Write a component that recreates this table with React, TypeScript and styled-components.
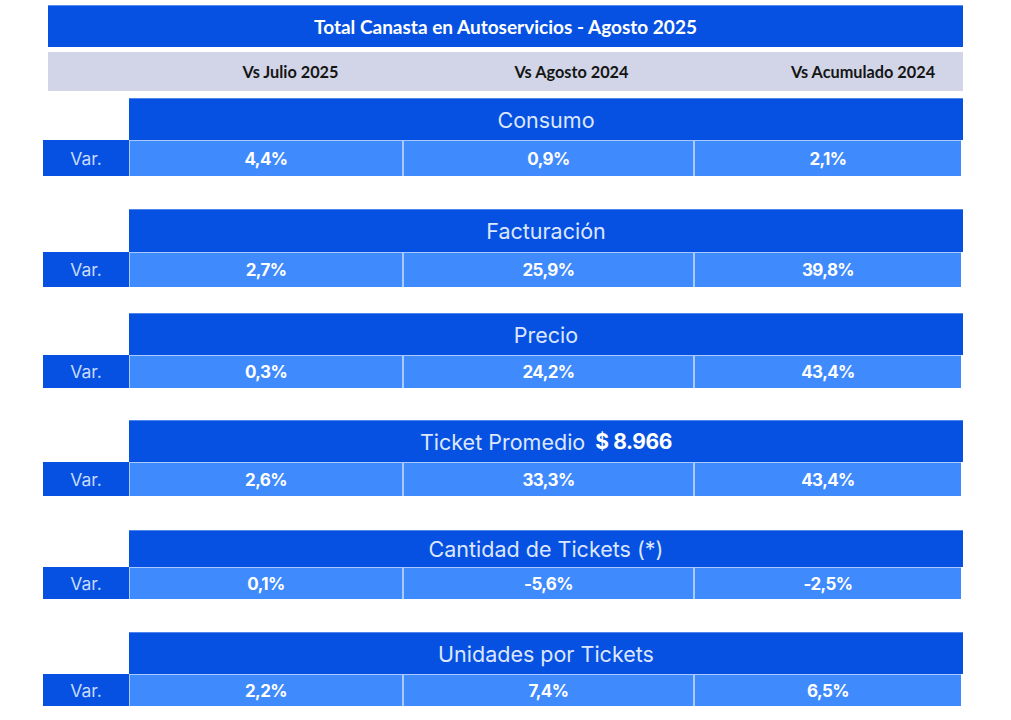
import React from 'react';
import styled, { createGlobalStyle } from 'styled-components';

const DARK = '#0651e1';
const LIGHT = '#3f8afc';
const LINE = '#a9c9ff';

const GlobalStyle = createGlobalStyle`
  html, body {
    margin: 0;
    padding: 0;
    background: #ffffff;
  }
  body {
    font-family: Inter, 'Noto Sans', sans-serif;
  }
`;

interface Metric {
  title: string;
  amount?: string;
  values: string[];
  top: number;
  headH: number;
  rowH: number;
}

const metrics: Metric[] = [
  { title: 'Consumo', values: ['4,4%', '0,9%', '2,1%'], top: 7, headH: 42, rowH: 36 },
  { title: 'Facturación', values: ['2,7%', '25,9%', '39,8%'], top: 33, headH: 43, rowH: 35 },
  { title: 'Precio', values: ['0,3%', '24,2%', '43,4%'], top: 26, headH: 42, rowH: 33 },
  {
    title: 'Ticket Promedio',
    amount: '$ 8.966',
    values: ['2,6%', '33,3%', '43,4%'],
    top: 32,
    headH: 42,
    rowH: 34,
  },
  { title: 'Cantidad de Tickets (*)', values: ['0,1%', '-5,6%', '-2,5%'], top: 34, headH: 37, rowH: 32 },
  { title: 'Unidades por Tickets', values: ['2,2%', '7,4%', '6,5%'], top: 33, headH: 42, rowH: 32 },
];

const compare = [
  { label: 'Vs Julio 2025', shift: 50 },
  { label: 'Vs Agosto 2024', shift: 48 },
  { label: 'Vs Acumulado 2024', shift: 70 },
];

export default function App() {
  return (
    <Page>
      <GlobalStyle />
      <TitleBar>Total Canasta en Autoservicios - Agosto 2025</TitleBar>
      <CompareBand>
        <span />
        {compare.map((c) => (
          <CompareLabel key={c.label} $shift={c.shift}>
            {c.label}
          </CompareLabel>
        ))}
      </CompareBand>
      {metrics.map((m) => (
        <Block key={m.title} $top={m.top}>
          <MetricHead $h={m.headH}>
            {m.title}
            {m.amount && <Amount>{m.amount}</Amount>}
          </MetricHead>
          <VarRow $h={m.rowH}>
            <VarCell>Var.</VarCell>
            {m.values.map((v, i) => (
              <ValueCell key={i} $first={i === 0}>
                {v}
              </ValueCell>
            ))}
          </VarRow>
        </Block>
      ))}
    </Page>
  );
}

const Page = styled.div`
  width: 1011px;
  height: 720px;
  padding: 5px 0 0 43px;
  box-sizing: border-box;
  display: flex;
  flex-direction: column;
  overflow: hidden;
`;

const TitleBar = styled.div`
  margin-left: 5px;
  width: 915px;
  height: 42px;
  background: ${DARK};
  border-top: 1px solid #5b8ef0;
  box-sizing: border-box;
  display: flex;
  align-items: center;
  justify-content: center;
  color: #ffffff;
  font-family: Lato, 'Open Sans', sans-serif;
  font-weight: 700;
  font-size: 19px;
`;

const CompareBand = styled.div`
  margin: 5px 0 0 5px;
  width: 915px;
  height: 39px;
  background: #d1d5e7;
  display: grid;
  grid-template-columns: 81px 273px 291px 270px;
  align-items: center;
`;

const CompareLabel = styled.div<{ $shift: number }>`
  text-align: center;
  padding-left: ${({ $shift }) => $shift}px;
  color: #151515;
  font-family: Lato, 'Open Sans', sans-serif;
  font-weight: 700;
  font-size: 16.3px;
`;

const Block = styled.section<{ $top: number }>`
  margin-top: ${({ $top }) => $top}px;
  width: 920px;
  display: flex;
  flex-direction: column;
`;

const MetricHead = styled.div<{ $h: number }>`
  margin-left: 86px;
  height: ${({ $h }) => $h}px;
  background: ${DARK};
  border-top: 1px solid #4f86ee;
  box-sizing: border-box;
  display: flex;
  align-items: center;
  justify-content: center;
  gap: 10px;
  color: #dce7ff;
  font-size: 21.5px;
  font-weight: 400;
  letter-spacing: 0;
`;

const Amount = styled.span`
  color: #ffffff;
  font-weight: 700;
  font-size: 21px;
  letter-spacing: -0.4px;
`;

const VarRow = styled.div<{ $h: number }>`
  height: ${({ $h }) => $h}px;
  display: grid;
  grid-template-columns: 86px 273px 291px 268px;
`;

const VarCell = styled.div`
  background: ${DARK};
  display: flex;
  align-items: center;
  justify-content: center;
  color: #c6dbff;
  font-size: 17.5px;
  font-weight: 400;
`;

const ValueCell = styled.div<{ $first: boolean }>`
  background: ${LIGHT};
  border-top: 1px solid ${LINE};
  border-left: ${({ $first }) => ($first ? `1px solid ${LINE}` : `2px solid ${LINE}`)};
  box-sizing: border-box;
  display: flex;
  align-items: center;
  justify-content: center;
  color: #ffffff;
  font-size: 17px;
  font-weight: 700;
  letter-spacing: -0.6px;
`;
